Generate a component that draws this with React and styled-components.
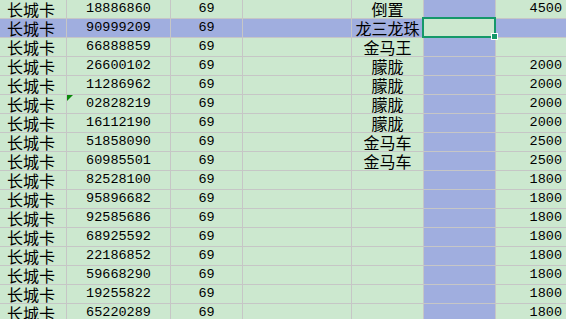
import React from 'react'
import styled, { createGlobalStyle } from 'styled-components'

const GlobalStyle = createGlobalStyle`
  html, body {
    margin: 0;
    padding: 0;
    background: #cce8cf;
    overflow: hidden;
  }
`

const GREEN = '#cce8cf'
const BLUE = '#a0aedf'
const LINE = '#c6c6c6'

const Sheet = styled.div`
  width: 566px;
  height: 319px;
  overflow: hidden;
  background: ${GREEN};
`

const Row = styled.div`
  display: grid;
  grid-template-columns: 67px 104px 72px 109px 72px 72px 80px;
  height: 19px;
`

const Cell = styled.div`
  position: relative;
  box-sizing: border-box;
  height: 19px;
  border-right: 1px solid ${LINE};
  border-bottom: 1px solid ${LINE};
  background: ${p => (p.$hl ? BLUE : GREEN)};
  display: flex;
  align-items: center;
  justify-content: ${p => p.$align === 'left' ? 'flex-start' : p.$align === 'right' ? 'flex-end' : 'center'};
  padding: ${p => p.$align === 'left' ? '0 0 0 7px' : p.$align === 'right' ? '0 13px 0 0' : '0'};
  font-family: ${p => p.$mono ? '"Liberation Mono", monospace' : '"Noto Sans CJK SC", sans-serif'};
  font-size: ${p => p.$mono ? '13.5px' : '16px'};
  line-height: 18px;
  color: #000;
  white-space: nowrap;
  overflow: visible;
`

const TextFlag = styled.span`
  position: absolute;
  left: 0;
  top: 0;
  width: 0;
  height: 0;
  border-top: 6px solid #0b8a0b;
  border-right: 6px solid transparent;
`

const ActiveFrame = styled.div`
  position: absolute;
  left: -2px;
  top: -2px;
  right: -1px;
  bottom: -1px;
  border: 2px solid #15986a;
  pointer-events: none;
  z-index: 2;
`

const FillHandle = styled.span`
  position: absolute;
  right: -4px;
  bottom: -4px;
  width: 5px;
  height: 5px;
  background: #15986a;
  border: 1px solid #fff;
`

const rows = [
  ['18886860', '倒置', '4500'],
  ['90999209', '龙三龙珠', ''],
  ['66888859', '金马王', ''],
  ['26600102', '朦胧', '2000'],
  ['11286962', '朦胧', '2000'],
  ['02828219', '朦胧', '2000'],
  ['16112190', '朦胧', '2000'],
  ['51858090', '金马车', '2500'],
  ['60985501', '金马车', '2500'],
  ['82528100', '', '1800'],
  ['95896682', '', '1800'],
  ['92585686', '', '1800'],
  ['68925592', '', '1800'],
  ['22186852', '', '1800'],
  ['59668290', '', '1800'],
  ['19255822', '', '1800'],
  ['65220289', '', '1800']
]

const ACTIVE_ROW = 1

const App = () => {
  return (
    <Sheet>
      <GlobalStyle />
      {rows.map(([num, name, price], i) => {
        const sel = i === ACTIVE_ROW
        return (
          <Row key={i}>
            <Cell $align="left" $hl={sel}>长城卡</Cell>
            <Cell $mono $hl={sel}>
              {num.startsWith('0') && <TextFlag />}
              {num}
            </Cell>
            <Cell $mono $hl={sel}>69</Cell>
            <Cell $hl={sel} />
            <Cell $hl={sel}>{name}</Cell>
            <Cell $hl={!sel}>
              {sel && (
                <ActiveFrame>
                  <FillHandle />
                </ActiveFrame>
              )}
            </Cell>
            <Cell $mono $align="right" $hl={sel}>{price}</Cell>
          </Row>
        )
      })}
    </Sheet>
  )
}

export default App
